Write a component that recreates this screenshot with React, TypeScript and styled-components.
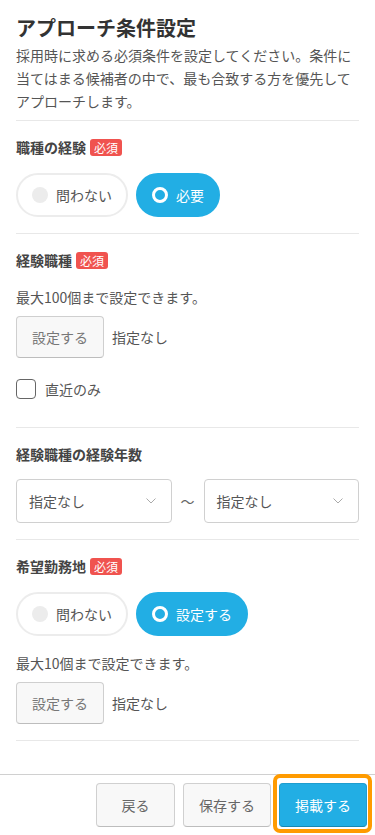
import React from "react";
import styled, { createGlobalStyle } from "styled-components";

const GlobalStyle = createGlobalStyle`
  * { box-sizing: border-box; }
  html, body { margin: 0; padding: 0; background: #fff; }
  body {
    font-family: "Noto Sans CJK JP", "Noto Sans", sans-serif;
    color: #555;
    -webkit-font-smoothing: antialiased;
  }
  button { font-family: inherit; }
`;

const Page = styled.div`
  min-height: 100vh;
  display: flex;
  flex-direction: column;
`;

const Main = styled.main`
  flex: 1;
  padding: 0 16px;
`;

const Header = styled.header`
  padding: 14px 0 7px;
  border-bottom: 1px solid #e8e8e8;
`;

const Title = styled.h1`
  margin: 0;
  font-size: 20px;
  line-height: 28px;
  font-weight: 700;
  color: #333;
`;

const Lead = styled.p`
  margin: 2px 0 0;
  font-size: 14px;
  line-height: 23px;
  color: #555;
`;

const Section = styled.section`
  padding: 16px 0;
  border-bottom: 1px solid #e8e8e8;
`;

const Label = styled.div`
  display: flex;
  align-items: center;
  gap: 4px;
  font-size: 14px;
  line-height: 20px;
  font-weight: 700;
  color: #444;
`;

const Required = styled.span`
  display: inline-block;
  padding: 0 4px;
  border-radius: 3px;
  background: #f0534f;
  color: #fff;
  font-size: 12px;
  line-height: 17px;
  font-weight: 400;
`;

const RadioGroup = styled.div`
  display: flex;
  gap: 8px;
  margin-top: 16px;
`;

const Pill = styled.button<{ $active?: boolean }>`
  display: flex;
  align-items: center;
  gap: 8px;
  height: 44px;
  padding: 0 14px;
  border-radius: 22px;
  border: 2px solid ${(p) => (p.$active ? "#22aee4" : "#ececec")};
  background: ${(p) => (p.$active ? "#22aee4" : "#fff")};
  color: ${(p) => (p.$active ? "#fff" : "#555")};
  font-size: 14px;
  cursor: pointer;
`;

const Dot = styled.span<{ $active?: boolean }>`
  width: 16px;
  height: 16px;
  border-radius: 50%;
  background: ${(p) => (p.$active ? "transparent" : "#ececec")};
  border: ${(p) => (p.$active ? "3px solid #fff" : "none")};
`;

const Note = styled.p`
  margin: 16px 0 8px;
  font-size: 14px;
  line-height: 22px;
  color: #555;
`;

const PickerRow = styled.div`
  display: flex;
  align-items: center;
  gap: 8px;
  font-size: 14px;
  color: #555;
`;

const GhostButton = styled.button`
  height: 42px;
  padding: 0 15px;
  border: 1px solid #cfcfcf;
  border-bottom-color: #bdbdbd;
  border-radius: 4px;
  background: #f8f8f8;
  color: #777;
  font-size: 14px;
  cursor: pointer;
`;

const CheckRow = styled.label`
  display: flex;
  align-items: center;
  gap: 9px;
  margin: 21px 0 12px;
  font-size: 14px;
  line-height: 20px;
  color: #555;
`;

const Box = styled.span`
  width: 20px;
  height: 20px;
  border: 1px solid #666;
  border-radius: 4px;
  background: #fff;
`;

const RangeRow = styled.div`
  display: grid;
  grid-template-columns: 1fr auto 1fr;
  align-items: center;
  gap: 9px;
  margin-top: 15px;
`;

const Select = styled.div`
  height: 44px;
  display: flex;
  align-items: center;
  justify-content: space-between;
  padding: 0 15px 0 12px;
  border: 1px solid #d0d0d0;
  border-radius: 4px;
  background: #fff;
  font-size: 14px;
  color: #555;
`;

const Tilde = styled.span`
  font-size: 14px;
  color: #666;
`;

const Footer = styled.footer`
  display: flex;
  justify-content: flex-end;
  gap: 8px;
  padding: 8px;
  border-top: 1px solid #d0d0d0;
  margin-top: 32px;
`;

const FooterButton = styled.button<{ $primary?: boolean }>`
  height: 44px;
  min-width: 79px;
  padding: 0 15px;
  border-radius: 4px;
  border: 1px solid ${(p) => (p.$primary ? "#1e9dcf" : "#d0d0d0")};
  border-bottom-color: ${(p) => (p.$primary ? "#1787b3" : "#bdbdbd")};
  background: ${(p) => (p.$primary ? "#22aee4" : "#f8f8f8")};
  color: ${(p) => (p.$primary ? "#fff" : "#666")};
  font-size: 14px;
  cursor: pointer;
`;

const HighlightWrap = styled.div`
  position: relative;
  display: flex;
`;

const Highlight = styled.span`
  position: absolute;
  top: -9px;
  left: -6px;
  right: -5px;
  bottom: -6px;
  border: 4px solid #ff9b00;
  border-radius: 7px;
  pointer-events: none;
`;

const Chevron = () => (
  <svg width="10" height="6" viewBox="0 0 10 6" fill="none">
    <polyline points="0.5,0.5 5,5 9.5,0.5" stroke="#aaa" strokeWidth="1" />
  </svg>
);

const Radio = ({ options, value }: { options: string[]; value: string }) => (
  <RadioGroup>
    {options.map((o) => (
      <Pill key={o} $active={o === value}>
        <Dot $active={o === value} />
        {o}
      </Pill>
    ))}
  </RadioGroup>
);

const Picker = () => (
  <PickerRow>
    <GhostButton>設定する</GhostButton>
    <span>指定なし</span>
  </PickerRow>
);

export default function App() {
  return (
    <Page>
      <GlobalStyle />
      <Main>
        <Header>
          <Title>アプローチ条件設定</Title>
          <Lead>
            採用時に求める必須条件を設定してください。条件に当てはまる候補者の中で、最も合致する方を優先してアプローチします。
          </Lead>
        </Header>

        <Section>
          <Label>
            職種の経験<Required>必須</Required>
          </Label>
          <Radio options={["問わない", "必要"]} value="必要" />
        </Section>

        <Section>
          <Label>
            経験職種<Required>必須</Required>
          </Label>
          <Note>最大100個まで設定できます。</Note>
          <Picker />
          <CheckRow>
            <Box />
            直近のみ
          </CheckRow>
        </Section>

        <Section>
          <Label>経験職種の経験年数</Label>
          <RangeRow>
            <Select>
              指定なし
              <Chevron />
            </Select>
            <Tilde>〜</Tilde>
            <Select>
              指定なし
              <Chevron />
            </Select>
          </RangeRow>
        </Section>

        <Section>
          <Label>
            希望勤務地<Required>必須</Required>
          </Label>
          <Radio options={["問わない", "設定する"]} value="設定する" />
          <Note>最大10個まで設定できます。</Note>
          <Picker />
        </Section>
      </Main>

      <Footer>
        <FooterButton>戻る</FooterButton>
        <FooterButton>保存する</FooterButton>
        <HighlightWrap>
          <FooterButton $primary>掲載する</FooterButton>
          <Highlight />
        </HighlightWrap>
      </Footer>
    </Page>
  );
}
